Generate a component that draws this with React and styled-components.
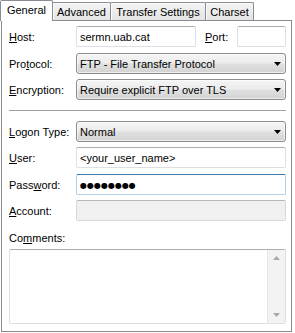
import styled, { createGlobalStyle } from "styled-components";

const Global = createGlobalStyle`
  html, body {
    margin: 0;
    background: #ffffff;
  }
  body {
    font-family: "Liberation Sans", Arial, sans-serif;
    font-size: 11px;
    color: #000;
  }
  u {
    text-decoration: underline;
    text-underline-offset: 1px;
  }
`;

const Dialog = styled.div`
  width: 295px;
  height: 333px;
`;

const TabRow = styled.div`
  display: flex;
  align-items: flex-end;
  height: 21px;
  position: relative;
  z-index: 1;
`;

const Tab = styled.div`
  box-sizing: border-box;
  width: ${(p) => p.$w}px;
  height: ${(p) => (p.$active ? 21 : 18)}px;
  margin-left: ${(p) => (p.$first ? 0 : -1)}px;
  margin-bottom: ${(p) => (p.$active ? 0 : 1)}px;
  border: 1px solid #898c95;
  border-bottom: none;
  border-radius: 2px 2px 0 0;
  background: ${(p) =>
    p.$active ? "#ffffff" : "linear-gradient(#f4f4f4, #e4e4e4)"};
  box-shadow: ${(p) => (p.$active ? "none" : "inset 1px 1px 0 #fbfbfb")};
  display: flex;
  align-items: center;
  justify-content: center;
  padding-bottom: ${(p) => (p.$active ? 2 : 0)}px;
  position: relative;
  z-index: ${(p) => (p.$active ? 2 : 1)};
  white-space: nowrap;
`;

const Panel = styled.div`
  box-sizing: border-box;
  margin: -1px 0 0 1px;
  width: 291px;
  height: 312px;
  border: 1px solid #898c95;
  background: #fff;
  padding: 5px 5px 7px 7px;
  display: flex;
  flex-direction: column;
`;

const Row = styled.div`
  display: flex;
  align-items: center;
  height: 21px;
  margin-top: ${(p) => p.$mt || 0}px;
`;

const Label = styled.div`
  flex: none;
  width: ${(p) => p.$w || 67}px;
  margin-left: ${(p) => p.$ml || 0}px;
  white-space: nowrap;
`;

const Field = styled.div`
  box-sizing: border-box;
  height: 21px;
  width: ${(p) => (p.$w ? p.$w + "px" : "auto")};
  flex: ${(p) => (p.$w ? "none" : "1")};
  border: 1px solid ${(p) => (p.$focus ? "#b5cfe7" : p.$off ? "#d9d9d9" : "#dbdfe6")};
  border-top-color: ${(p) => (p.$focus ? "#3d7bad" : p.$off ? "#b8b8b8" : "#abadb3")};
  border-radius: 2px;
  background: ${(p) => (p.$off ? "#f0f0f0" : "#fff")};
  padding: 0 3px;
  display: flex;
  align-items: center;
  white-space: nowrap;
  overflow: hidden;
`;

const Dots = styled.span`
  font-family: "DejaVu Sans", sans-serif;
  font-size: 8px;
  letter-spacing: 0px;
  padding-top: 1px;
`;

const Select = styled.div`
  box-sizing: border-box;
  flex: 1;
  height: 21px;
  border: 1px solid #8c8c8c;
  border-radius: 3px;
  background: linear-gradient(#f5f5f5, #ececec 45%, #dfdfdf 55%, #d3d3d3);
  box-shadow: inset 0 0 0 1px rgba(255, 255, 255, 0.6);
  padding: 0 4px 0 3px;
  display: flex;
  align-items: center;
  justify-content: space-between;
  white-space: nowrap;
`;

const Separator = styled.div`
  height: 0;
  border-top: 1px solid #a0a0a0;
  border-bottom: 1px solid #ffffff;
  margin-top: 10px;
`;

const Caption = styled.div`
  line-height: 13px;
  margin-top: 11px;
`;

const Memo = styled.div`
  box-sizing: border-box;
  height: 75px;
  margin-top: 4px;
  border: 1px solid #dbdfe6;
  border-top-color: #abadb3;
  border-radius: 2px;
  display: flex;
  justify-content: flex-end;
`;

const ScrollBar = styled.div`
  width: 17px;
  background: #f3f3f3;
  border-left: 1px solid #e6e6e6;
  display: flex;
  flex-direction: column;
  justify-content: space-between;
  align-items: center;
  padding: 6px 0;
`;

const Arrow = ({ up, color = "#000" }) => (
  <svg width="7" height="4" viewBox="0 0 7 4">
    <path d={up ? "M0 4h7L3.5 0z" : "M0 0h7L3.5 4z"} fill={color} />
  </svg>
);

const tabs = [
  { t: "General", w: 53, active: true },
  { t: "Advanced", w: 59 },
  { t: "Transfer Settings", w: 96 },
  { t: "Charset", w: 49 },
];

export default function App() {
  return (
    <Dialog>
      <Global />
      <TabRow>
        {tabs.map((tab, i) => (
          <Tab key={tab.t} $w={tab.w} $active={tab.active} $first={i === 0}>
            {tab.t}
          </Tab>
        ))}
      </TabRow>
      <Panel>
        <Row>
          <Label>
            <u>H</u>ost:
          </Label>
          <Field $w={120}>sermn.uab.cat</Field>
          <Label $w={32} $ml={9}>
            <u>P</u>ort:
          </Label>
          <Field />
        </Row>
        <Row $mt={6}>
          <Label>
            Pro<u>t</u>ocol:
          </Label>
          <Select>
            FTP - File Transfer Protocol
            <Arrow />
          </Select>
        </Row>
        <Row $mt={5}>
          <Label>
            <u>E</u>ncryption:
          </Label>
          <Select>
            Require explicit FTP over TLS
            <Arrow />
          </Select>
        </Row>
        <Separator />
        <Row $mt={9}>
          <Label>
            <u>L</u>ogon Type:
          </Label>
          <Select>
            Normal
            <Arrow />
          </Select>
        </Row>
        <Row $mt={5}>
          <Label>
            <u>U</u>ser:
          </Label>
          <Field>&lt;your_user_name&gt;</Field>
        </Row>
        <Row $mt={6}>
          <Label>
            Pass<u>w</u>ord:
          </Label>
          <Field $focus>
            <Dots>●●●●●●●●</Dots>
          </Field>
        </Row>
        <Row $mt={5}>
          <Label>
            <u>A</u>ccount:
          </Label>
          <Field $off />
        </Row>
        <Caption>
          Co<u>m</u>ments:
        </Caption>
        <Memo>
          <ScrollBar>
            <Arrow up color="#a8a8a8" />
            <Arrow color="#a8a8a8" />
          </ScrollBar>
        </Memo>
      </Panel>
    </Dialog>
  );
}
